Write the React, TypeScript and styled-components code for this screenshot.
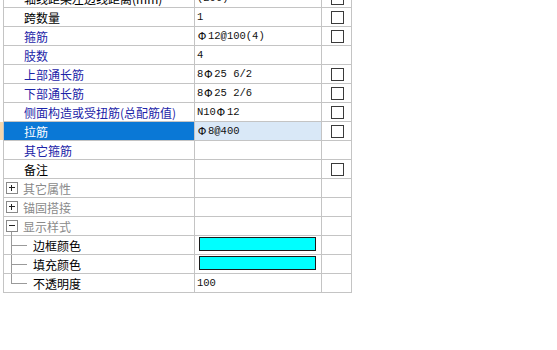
import React from "react";
import styled, { createGlobalStyle, css } from "styled-components";

const Global = createGlobalStyle`
  html, body { margin: 0; padding: 0; background: #ffffff; }
  body { font-family: "Noto Sans CJK SC", "Liberation Sans", sans-serif; font-size: 12px; }
`;

type Tone = "black" | "blue" | "gray";
type Kind = "prop" | "group" | "child";

interface RowData {
  kind: Kind;
  label: string;
  tone?: Tone;
  value?: string;
  check?: boolean;
  selected?: boolean;
  expanded?: boolean;
  swatch?: string;
  last?: boolean;
}

const rows: RowData[] = [
  { kind: "prop", label: "轴线距梁左边线距离(mm)", tone: "black", value: "(200)", check: true },
  { kind: "prop", label: "跨数量", tone: "black", value: "1", check: true },
  { kind: "prop", label: "箍筋", tone: "blue", value: " Φ12@100(4)", check: true },
  { kind: "prop", label: "肢数", tone: "blue", value: "4" },
  { kind: "prop", label: "上部通长筋", tone: "blue", value: "8Φ25 6/2", check: true },
  { kind: "prop", label: "下部通长筋", tone: "blue", value: "8Φ25 2/6", check: true },
  { kind: "prop", label: "侧面构造或受扭筋(总配筋值)", tone: "blue", value: "N10Φ12", check: true },
  { kind: "prop", label: "拉筋", tone: "blue", value: " Φ8@400", check: true, selected: true },
  { kind: "prop", label: "其它箍筋", tone: "blue" },
  { kind: "prop", label: "备注", tone: "black", check: true },
  { kind: "group", label: "其它属性", expanded: false },
  { kind: "group", label: "锚固搭接", expanded: false },
  { kind: "group", label: "显示样式", expanded: true },
  { kind: "child", label: "边框颜色", swatch: "#00ffff" },
  { kind: "child", label: "填充颜色", swatch: "#00ffff" },
  { kind: "child", label: "不透明度", value: "100", last: true },
];

const toneColor: Record<Tone, string> = {
  black: "#000000",
  blue: "#1c24a8",
  gray: "#8a8a8a",
};

const LINE = "#c4c4c4";

const Sheet = styled.div`
  margin-top: -11px;
  display: flex;
  flex-direction: column;
  width: 352px;
`;

const Row = styled.div`
  display: grid;
  grid-template-columns: 3px 192px 127px 30px;
  height: 19px;
`;

const Indicator = styled.div<{ $on?: boolean }>`
  background: ${(p) => (p.$on ? "#f6d7ae" : "transparent")};
  height: 18px;
`;

const cellBase = css`
  box-sizing: border-box;
  height: 19px;
  border-bottom: 1px solid ${LINE};
  border-right: 1px solid ${LINE};
  display: flex;
  align-items: center;
  white-space: nowrap;
  overflow: hidden;
`;

const NameCell = styled.div<{ $selected?: boolean; $tone: Tone; $kind: Kind }>`
  ${cellBase};
  position: relative;
  border-left: 1px solid ${LINE};
  background: ${(p) => (p.$selected ? "#0a78d6" : "#ffffff")};
  color: ${(p) => (p.$selected ? "#ffffff" : toneColor[p.$tone])};
  padding-left: ${(p) => (p.$kind === "prop" ? "20px" : p.$kind === "group" ? "2px" : "0")};
  font-size: 12px;
  line-height: 18px;
  overflow: visible;
`;

const Label = styled.span`
  display: inline-block;
  padding-top: 1px;
`;

const GroupLabel = styled(Label)`
  margin-left: 5px;
`;

const ValueCell = styled.div<{ $selected?: boolean }>`
  ${cellBase};
  background: ${(p) => (p.$selected ? "#d9e8f7" : "#ffffff")};
  padding-left: 2px;
  font-family: "Liberation Mono", "Noto Sans CJK SC", monospace;
  font-size: 10.5px;
  color: #111111;
  white-space: pre;
`;

const Rebar = styled.span`
  font-family: "DejaVu Sans", "Noto Sans CJK SC", sans-serif;
  font-size: 11px;
  display: inline-block;
  width: 10px;
  text-align: center;
  margin: 0 1px 0 0;
`;

const CheckCell = styled.div`
  ${cellBase};
  justify-content: center;
`;

const CheckBox = styled.span`
  box-sizing: border-box;
  width: 13px;
  height: 13px;
  border: 1px solid #3a3a3a;
  background: #ffffff;
  margin-left: 1px;
`;

const Expander = styled.span<{ $open?: boolean }>`
  position: relative;
  box-sizing: border-box;
  width: 12px;
  height: 12px;
  border: 1px solid #8a8a8a;
  background: #ffffff;
  flex: none;
  &::before {
    content: "";
    position: absolute;
    left: 2px;
    top: 4px;
    width: 6px;
    height: 1px;
    background: #222222;
  }
  &::after {
    content: "";
    position: absolute;
    left: 4px;
    top: 2px;
    width: 1px;
    height: 6px;
    background: #222222;
    display: ${(p) => (p.$open ? "none" : "block")};
  }
`;

const GroupStem = styled.span`
  position: absolute;
  left: 7px;
  top: 15px;
  width: 1px;
  height: 4px;
  background: #9a9a9a;
`;

const TreeGuide = styled.span<{ $last?: boolean }>`
  position: relative;
  width: 29px;
  height: 18px;
  flex: none;
  &::before {
    content: "";
    position: absolute;
    left: 7px;
    top: 0;
    width: 1px;
    height: ${(p) => (p.$last ? "9px" : "18px")};
    background: #9a9a9a;
  }
  &::after {
    content: "";
    position: absolute;
    left: 7px;
    top: 9px;
    width: 16px;
    height: 1px;
    background: #9a9a9a;
  }
`;

const Swatch = styled.span<{ $color: string }>`
  box-sizing: border-box;
  display: block;
  width: 117px;
  height: 14px;
  margin-left: 2px;
  margin-top: -2px;
  border: 1px solid #1a1a1a;
  background: ${(p) => p.$color};
`;

function renderValue(v: string) {
  const parts = v.split("Φ");
  return parts.map((part, i) => (
    <React.Fragment key={i}>
      {i > 0 && <Rebar>Φ</Rebar>}
      {part}
    </React.Fragment>
  ));
}

function PropertyRow({ r }: { r: RowData }) {
  const tone: Tone = r.kind === "group" ? "gray" : r.tone ?? "black";
  return (
    <Row>
      <Indicator $on={r.selected} />
      <NameCell $selected={r.selected} $tone={tone} $kind={r.kind}>
        {r.kind === "group" && (
          <>
            <Expander $open={r.expanded} />
            {r.expanded && <GroupStem />}
            <GroupLabel>{r.label}</GroupLabel>
          </>
        )}
        {r.kind === "child" && (
          <>
            <TreeGuide $last={r.last} />
            <Label>{r.label}</Label>
          </>
        )}
        {r.kind === "prop" && <Label>{r.label}</Label>}
      </NameCell>
      <ValueCell $selected={r.selected}>
        {r.swatch ? <Swatch $color={r.swatch} /> : renderValue(r.value ?? "")}
      </ValueCell>
      <CheckCell>{r.check && <CheckBox />}</CheckCell>
    </Row>
  );
}

export default function App() {
  return (
    <>
      <Global />
      <Sheet>
        {rows.map((r, i) => (
          <PropertyRow key={i} r={r} />
        ))}
      </Sheet>
    </>
  );
}
